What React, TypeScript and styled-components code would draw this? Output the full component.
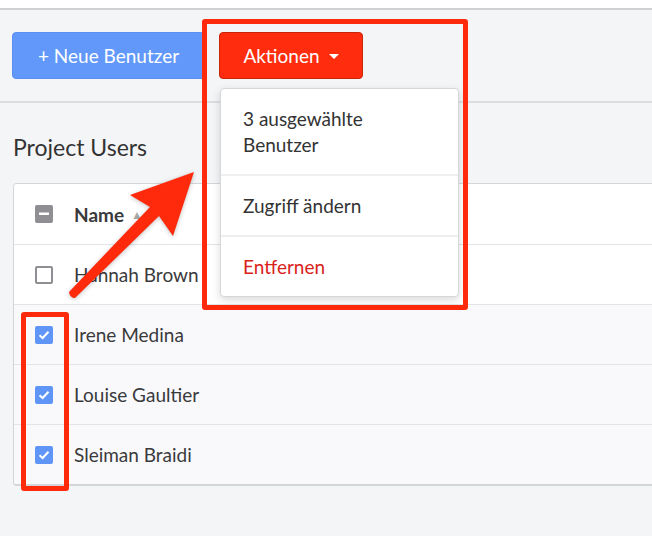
import React from "react";
import styled, { createGlobalStyle, css } from "styled-components";

const GlobalStyle = createGlobalStyle`
  body {
    margin: 0;
    background: #f4f5f7;
    font-family: Lato, "Open Sans", sans-serif;
    color: #333;
    overflow: hidden;
  }
`;

const Page = styled.div`
  position: relative;
  width: 652px;
  height: 536px;
  overflow: hidden;
`;

const TopStrip = styled.div`
  height: 8px;
  background: #fff;
  border-bottom: 2px solid #cfd0d3;
`;

const Toolbar = styled.div`
  display: flex;
  gap: 14px;
  padding: 22px 12px 22px;
  border-bottom: 2px solid #dcdde0;
`;

const Button = styled.button<{ variant: "primary" | "danger"; width: number }>`
  display: flex;
  align-items: center;
  justify-content: center;
  gap: 9px;
  width: ${(p) => p.width}px;
  height: 47px;
  border-radius: 4px;
  font-family: Lato, sans-serif;
  font-size: 19px;
  color: #fff;
  cursor: pointer;
  ${(p) =>
    p.variant === "primary"
      ? css`
          background: #6198fa;
          border: 1px solid #5b8ff0;
        `
      : css`
          background: #ff2d0d;
          border: 1px solid #c92508;
        `}
`;

const Caret = styled.span`
  width: 0;
  height: 0;
  border-left: 5px solid transparent;
  border-right: 5px solid transparent;
  border-top: 5px solid #fff;
  margin-top: 2px;
`;

const DropdownWrap = styled.div`
  position: relative;
`;

const Menu = styled.div`
  position: absolute;
  top: 56px;
  left: 1px;
  width: 237px;
  background: #fff;
  border: 1px solid #d6d7da;
  border-radius: 4px;
  box-shadow: 0 3px 8px rgba(0, 0, 0, 0.15);
  z-index: 2;
`;

const MenuItem = styled.div<{ danger?: boolean }>`
  padding: 17px 22px 16px;
  font-size: 19px;
  line-height: 26px;
  color: ${(p) => (p.danger ? "#d9221a" : "#333")};
  & + & {
    border-top: 2px solid #eeeff1;
  }
`;

const Section = styled.div`
  padding: 29px 0 0 13px;
`;

const Heading = styled.h2`
  margin: 0 0 21px;
  font-size: 23px;
  line-height: 30px;
  font-weight: 400;
  color: #333;
`;

const Table = styled.div`
  width: 700px;
  border: 1px solid #d4d5d8;
  border-radius: 4px 0 0 4px;
  overflow: hidden;
  border-bottom-width: 2px;
`;

const Row = styled.div<{ header?: boolean; selected?: boolean }>`
  display: flex;
  align-items: center;
  gap: 21px;
  box-sizing: border-box;
  height: 60px;
  padding-left: 21px;
  background: ${(p) => (p.selected ? "#f9f9fb" : "#fff")};
  font-size: 19px;
  font-weight: ${(p) => (p.header ? 700 : 400)};
  color: #3a3a3c;
  & + & {
    border-top: 1px solid #e3e4e7;
  }
`;

const Box = styled.span<{ state: "empty" | "checked" | "partial" }>`
  display: flex;
  align-items: center;
  justify-content: center;
  width: 18px;
  height: 18px;
  box-sizing: border-box;
  border-radius: 2px;
  ${(p) =>
    p.state === "empty"
      ? css`
          border: 2px solid #8e8e93;
          background: #fff;
        `
      : p.state === "checked"
      ? css`
          background: #5f95f7;
        `
      : css`
          background: #8e8e93;
        `}
`;

const Checkbox = ({ state }: { state: "empty" | "checked" | "partial" }) => (
  <Box state={state}>
    {state === "checked" && (
      <svg width="12" height="10" viewBox="0 0 12 10">
        <path d="M1.5 5.2 L4.6 8 L10.5 1.8" fill="none" stroke="#fff" strokeWidth="2" />
      </svg>
    )}
    {state === "partial" && (
      <svg width="10" height="4" viewBox="0 0 10 4">
        <rect x="0" y="0.5" width="10" height="2.5" fill="#fff" />
      </svg>
    )}
  </Box>
);

const SortIcon = styled.span`
  font-size: 12px;
  color: #aaa;
  margin-left: -14px;
`;

const Callout = styled.div<{ left: number; top: number; w: number; h: number }>`
  position: absolute;
  left: ${(p) => p.left}px;
  top: ${(p) => p.top}px;
  width: ${(p) => p.w}px;
  height: ${(p) => p.h}px;
  box-sizing: border-box;
  border: 5px solid #ff2a0c;
  border-radius: 3px;
  z-index: 3;
`;

const Arrow = styled.svg`
  position: absolute;
  left: 60px;
  top: 165px;
  z-index: 3;
  filter: drop-shadow(0 1px 2px rgba(0, 0, 0, 0.25));
`;

const users = [
  { name: "Hannah Brown", selected: false },
  { name: "Irene Medina", selected: true },
  { name: "Louise Gaultier", selected: true },
  { name: "Sleiman Braidi", selected: true },
];

export default function App() {
  return (
    <Page>
      <GlobalStyle />
      <TopStrip />
      <Toolbar>
        <Button variant="primary" width={193}>
          + Neue Benutzer
        </Button>
        <DropdownWrap>
          <Button variant="danger" width={144}>
            Aktionen <Caret />
          </Button>
          <Menu>
            <MenuItem>
              3 ausgewählte
              <br />
              Benutzer
            </MenuItem>
            <MenuItem>Zugriff ändern</MenuItem>
            <MenuItem danger>Entfernen</MenuItem>
          </Menu>
        </DropdownWrap>
      </Toolbar>
      <Section>
        <Heading>Project Users</Heading>
        <Table>
          <Row header>
            <Checkbox state="partial" />
            Name
            <SortIcon>▲</SortIcon>
          </Row>
          {users.map((u) => (
            <Row key={u.name} selected={u.selected}>
              <Checkbox state={u.selected ? "checked" : "empty"} />
              {u.name}
            </Row>
          ))}
        </Table>
      </Section>

      <Callout left={202} top={19} w={266} h={291} />
      <Callout left={21} top={312} w={48} h={179} />
      <Arrow width="140" height="140" viewBox="0 0 140 140">
        <path
          d="M134 7 L70 30 L90 42 L9 127 Q10 133 15 133 L99 51 L113 71 Z"
          fill="#ff2a0c"
          strokeLinejoin="round"
        />
      </Arrow>
    </Page>
  );
}
